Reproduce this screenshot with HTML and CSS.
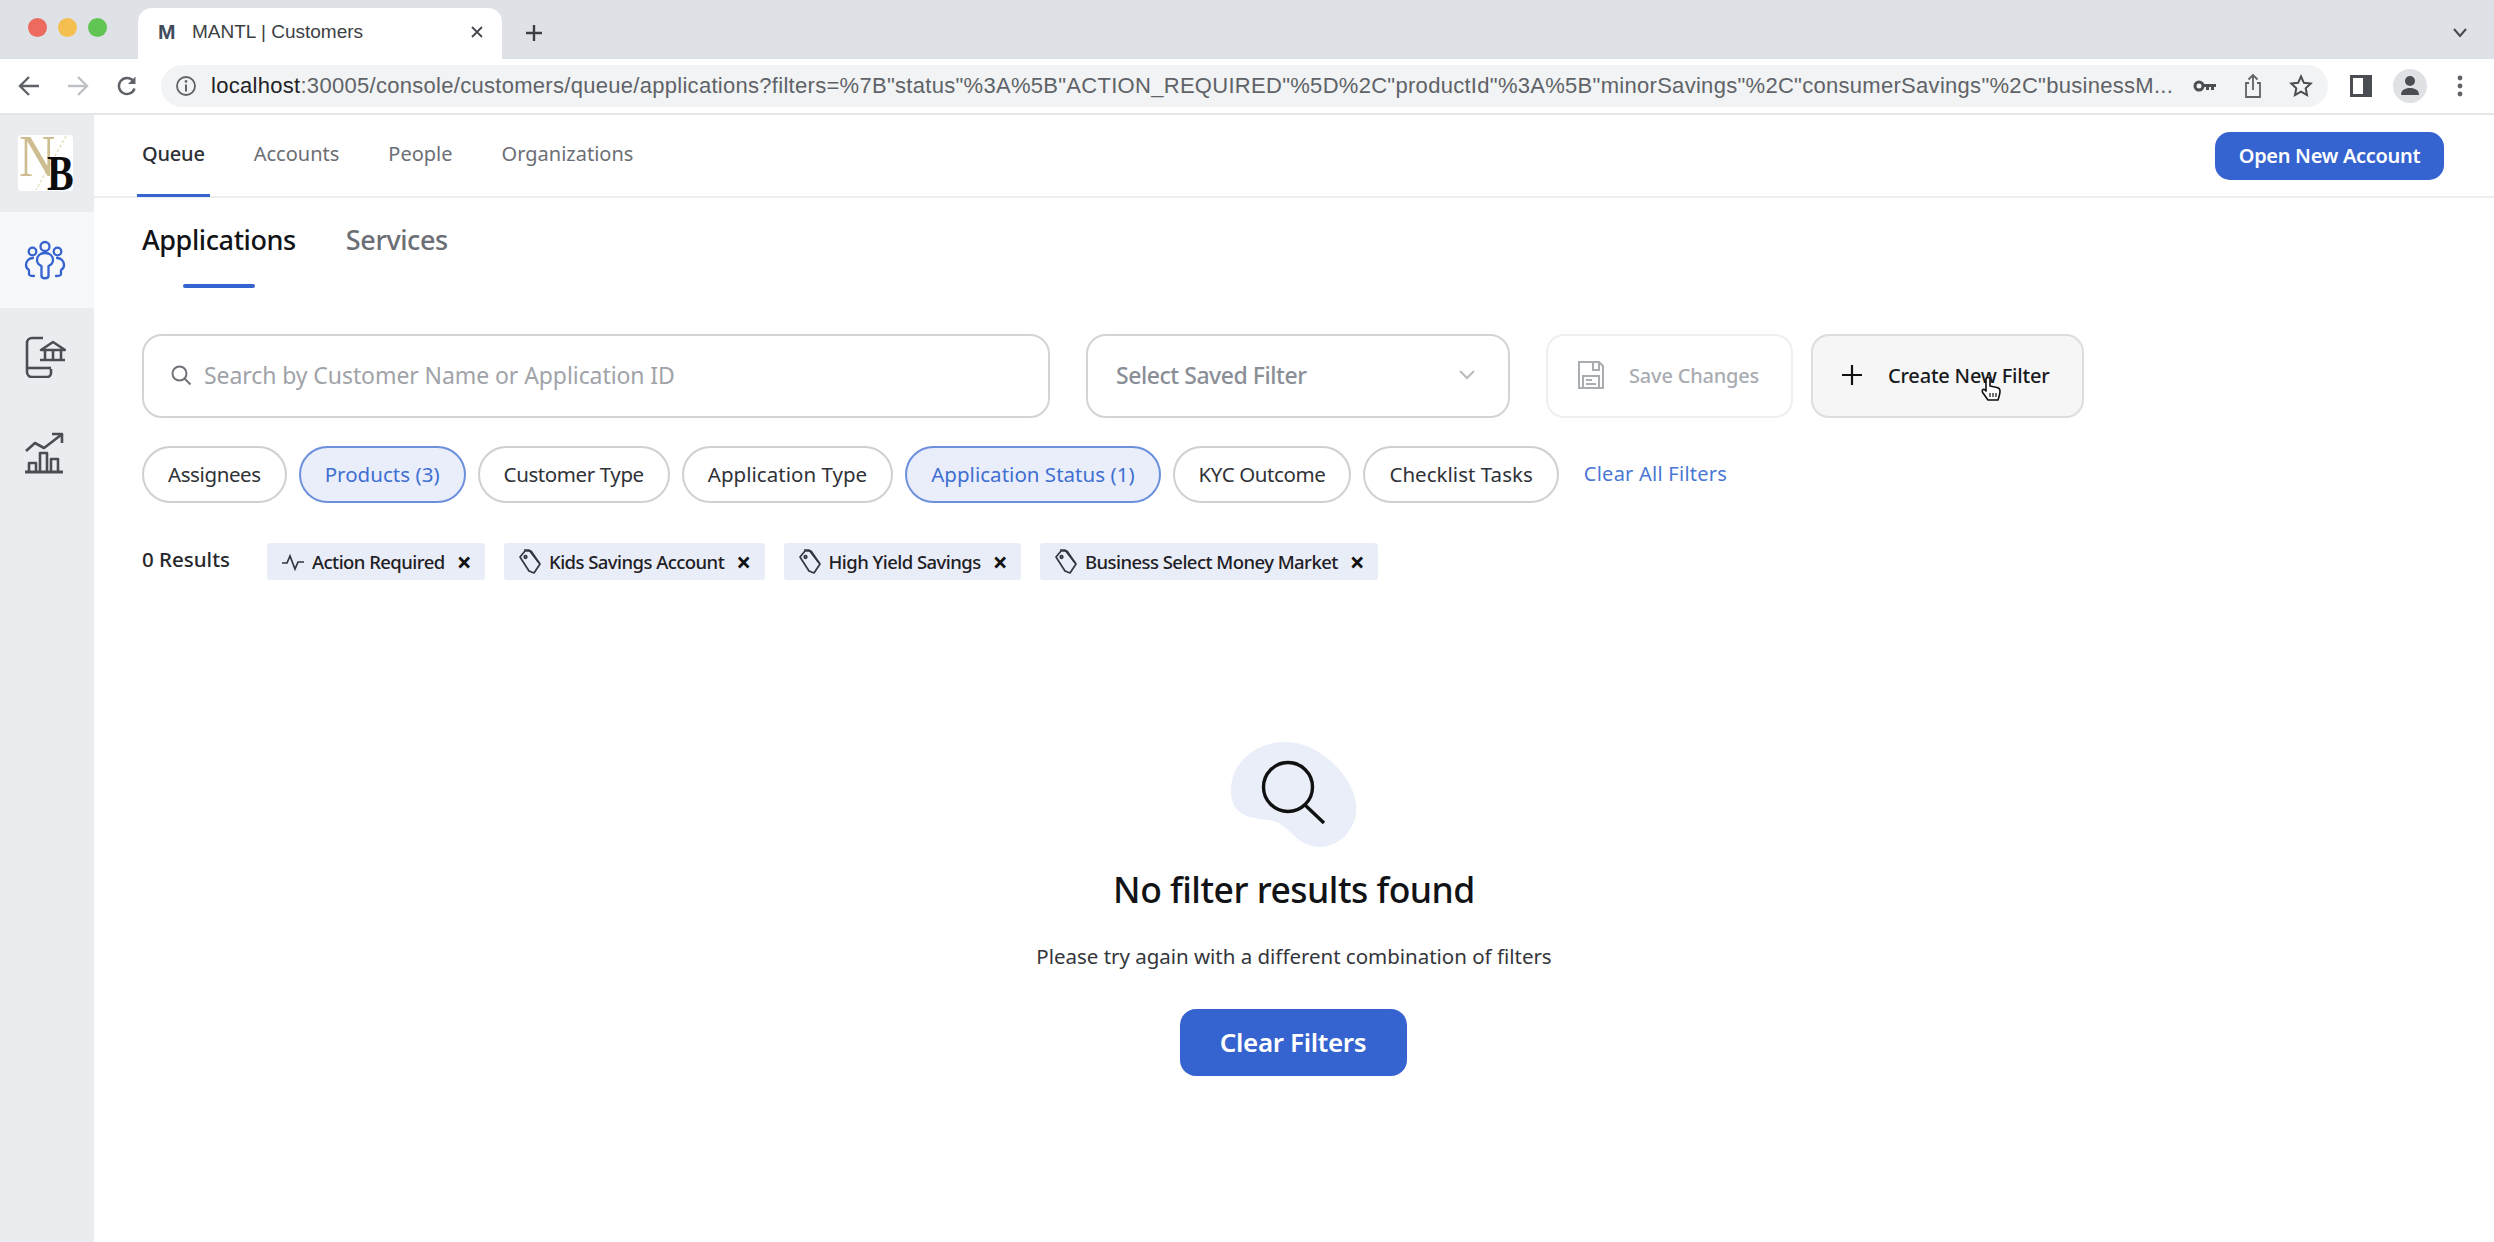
FILE: index.html
```html
<!DOCTYPE html>
<html lang="en">
<head>
<meta charset="utf-8">
<title>MANTL | Customers</title>
<link rel="stylesheet" href="styles.css">
</head>
<body>
<div class="browser">
  <div class="tabstrip">
    <div class="lights"><span class="light red"></span><span class="light yellow"></span><span class="light green"></span></div>
    <div class="tab">
      <span class="favicon">M</span>
      <span class="tab-title">MANTL | Customers</span>
      <svg class="tab-close" width="16" height="16" viewBox="0 0 16 16"><path d="M3 3l10 10M13 3L3 13" stroke="#44474c" stroke-width="1.8" fill="none"/></svg>
    </div>
    <svg class="new-tab" width="20" height="20" viewBox="0 0 20 20"><path d="M10 2v16M2 10h16" stroke="#3c4043" stroke-width="2.4"/></svg>
    <svg class="tab-menu" width="16" height="12" viewBox="0 0 16 12"><path d="M2 2l6 7 6-7" stroke="#45484d" stroke-width="2" fill="none"/></svg>
  </div>
  <div class="toolbar">
    <svg class="nav-ic" width="24" height="24" viewBox="0 0 24 24"><path d="M22 12H4M12 3l-9 9 9 9" stroke="#5f6368" stroke-width="2.4" fill="none"/></svg>
    <svg class="nav-ic" width="24" height="24" viewBox="0 0 24 24"><path d="M2 12h18M12 3l9 9-9 9" stroke="#bdc1c6" stroke-width="2.4" fill="none"/></svg>
    <svg class="nav-ic" width="24" height="24" viewBox="0 0 24 24"><path d="M19.5 14.5A8 8 0 1 1 18 6.8" stroke="#5f6368" stroke-width="2.4" fill="none"/><path d="M20.5 2.5v7.5H13z" fill="#5f6368"/></svg>
    <div class="omnibox">
      <svg width="22" height="22" viewBox="0 0 22 22"><circle cx="11" cy="11" r="9" stroke="#5f6368" stroke-width="1.8" fill="none"/><path d="M11 9.5v7" stroke="#5f6368" stroke-width="2"/><circle cx="11" cy="6.4" r="1.3" fill="#5f6368"/></svg>
      <span class="url"><b>localhost</b>:30005/console/customers/queue/applications?filters=%7B"status"%3A%5B"ACTION_REQUIRED"%5D%2C"productId"%3A%5B"minorSavings"%2C"consumerSavings"%2C"businessM...</span>
      <div class="omni-icons">
        <svg width="24" height="14" viewBox="0 0 24 14"><circle cx="6" cy="7" r="4" stroke="#4a4d52" stroke-width="3" fill="none"/><path d="M10 5h13v3h-2v3h-3V8h-2v3h-3V8h-3z" fill="#4a4d52"/></svg>
        <svg width="20" height="28" viewBox="0 0 20 28"><path d="M6 11H3v14h14V11h-3M10 18V3M5.5 7.5L10 3l4.500 4.500" stroke="#5f6368" stroke-width="1.800" fill="none"/></svg>
        <svg width="24" height="24" viewBox="0 0 24 24"><path d="M12 2.500l2.900 6.300 6.800.8-5 4.700 1.300 6.800-6-3.400-6 3.400 1.300-6.800-5-4.700 6.800-.8z" stroke="#4a4d52" stroke-width="2" fill="none"/></svg>
      </div>
    </div>
    <svg class="side-ic" width="22" height="22" viewBox="0 0 22 22"><path d="M1.500 1.500h19v19h-19z" stroke="#4a4d52" stroke-width="3" fill="none"/><path d="M13 2h7v18h-7z" fill="#4a4d52"/></svg>
    <span class="avatar"><svg width="22" height="24" viewBox="0 0 22 24"><circle cx="11" cy="7" r="5" fill="#4a4d52"/><path d="M2 21c0-5 4-7 9-7s9 2 9 7z" fill="#4a4d52"/></svg></span>
    <svg class="kebab" width="6" height="22" viewBox="0 0 6 22"><circle cx="3" cy="3" r="2.400" fill="#5f6368"/><circle cx="3" cy="11" r="2.400" fill="#5f6368"/><circle cx="3" cy="19" r="2.400" fill="#5f6368"/></svg>
  </div>
  <div class="app">
    <aside class="rail">
      <div class="logo-cell">
        <svg class="logo" width="55" height="56" viewBox="0 0 55 56">
          <rect width="55" height="56" rx="4" fill="#fff"/>
          <path d="M48 1L18 55" stroke="#e3d9b0" stroke-width="1.200" stroke-dasharray="3 2"/>
          <text transform="translate(1 41) scale(.84 1)" class="logo-n">N</text>
          <text transform="translate(29 55) scale(.8 1)" class="logo-b">B</text>
        </svg>
      </div>
      <div class="rail-item active">
        <svg width="42" height="42" viewBox="0 0 42 42" fill="none" stroke="#3563cf" stroke-width="2.300" stroke-linecap="round" stroke-linejoin="round"><circle cx="21" cy="6.500" r="4.500"/><circle cx="8.500" cy="11.500" r="3.800"/><circle cx="33.500" cy="11.500" r="3.800"/><path d="M21 13c-5 0-8 3-8 7 0 3 2 5 4.500 6v10c0 3 7 3 7 0V26c2.500-1 4.500-3 4.500-6 0-4-3-7-8-7z"/><path d="M9 18c-4 0-7 3-7 7 0 3 2 4.500 3 5v4c0 1.500 2 2 5 2M33 18c4 0 7 3 7 7 0 3-2 4.500-3 5v4c0 1.500-2 2-5 2"/></svg>
      </div>
      <div class="rail-item">
        <svg width="42" height="42" viewBox="0 0 42 42" fill="none" stroke="#4a4d52" stroke-width="2.600" stroke-linejoin="round"><path d="M19 2H8a5 5 0 0 0-5 5v29a5 5 0 0 0 5 5h15a4 4 0 0 0 4-4v-4"/><path d="M3 32h24"/><path d="M17 14L29 6l12 8zM16 24h25M21 15v9M29 15v9M37 15v9" /></svg>
      </div>
      <div class="rail-item">
        <svg width="42" height="42" viewBox="0 0 42 42" fill="none" stroke="#4a4d52" stroke-width="2.600" stroke-linejoin="round"><path d="M2 19l9-8 9 5 17-13M28 2h10v9"/><path d="M1 40h38" stroke-width="3"/><path d="M5 40v-9h7v9M16 40V21h7v19M27 40V27h7v13"/></svg>
      </div>
    </aside>
    <main class="content">
      <header class="topnav">
        <nav class="topnav-links">
          <a class="topnav-link current">Queue</a>
          <a class="topnav-link">Accounts</a>
          <a class="topnav-link">People</a>
          <a class="topnav-link">Organizations</a>
        </nav>
        <button class="btn-primary small">Open New Account</button>
      </header>
      <div class="subtabs">
        <a class="subtab current">Applications</a>
        <a class="subtab">Services</a>
      </div>
      <div class="controls">
        <label class="field search">
          <svg width="22" height="22" viewBox="0 0 22 22" fill="none" stroke="#6f7277" stroke-width="2"><circle cx="9.500" cy="9.500" r="7"/><path d="M14.500 14.500l6 6"/></svg>
          <span>Search by Customer Name or Application ID</span>
        </label>
        <div class="field select">
          <span>Select Saved Filter</span>
          <svg width="18" height="12" viewBox="0 0 18 12" fill="none" stroke="#b8bbc0" stroke-width="2"><path d="M2 2l7 7 7-7"/></svg>
        </div>
        <button class="action save">
          <svg width="28" height="30" viewBox="0 0 28 30" fill="none" stroke="#a9acb1" stroke-width="2"><path d="M2 2h20l4 4v22H2z"/><path d="M16 2v8h6V2M6 16h16v12H6zM9 20h6M9 24h10"/></svg>
          Save Changes
        </button>
        <button class="action create">
          <svg width="22" height="22" viewBox="0 0 22 22"><path d="M11 1v20M1 11h20" stroke="#111" stroke-width="2.200"/></svg>
          Create New Filter
          <svg class="cursor" width="22" height="28" viewBox="0 0 22 28"><path d="M6 13V3.500a2 2 0 0 1 4 0V10l7 1.500c2 .5 3 1.500 3 3.500 0 3-1 6-2 9H8l-5-7c-1-1.500-1-3 0-3.500s2 0 3 1.500z" fill="#fff" stroke="#111" stroke-width="1.600" stroke-linejoin="round"/><path d="M10 17v4M13 17v4M16 17v4" stroke="#111" stroke-width="1.200"/></svg>
        </button>
      </div>
      <div class="chips">
        <button class="chip tight">Assignees</button>
        <button class="chip on">Products (3)</button>
        <button class="chip tight">Customer Type</button>
        <button class="chip">Application Type</button>
        <button class="chip on">Application Status (1)</button>
        <button class="chip tight">KYC Outcome</button>
        <button class="chip">Checklist Tasks</button>
        <a class="clear-all">Clear All Filters</a>
      </div>
      <div class="results">
        <span class="count">0 Results</span>
        <span class="tag">
          <svg width="24" height="18" viewBox="0 0 24 18" fill="none" stroke="#33363b" stroke-width="1.700"><path d="M1 10h5l3-7 5 13 3-7h6"/></svg>
          Action Required <i class="x">×</i>
        </span>
        <span class="tag">
          <svg class="tag-ic" width="24" height="26" viewBox="0 0 24 26" fill="none" stroke="#33363b" stroke-width="1.700" stroke-linejoin="round"><path d="M2 8l5-6h6l9 13-6 9-5-2z"/><path d="M6 1l5 0 10 13"/><circle cx="7.500" cy="8" r="1.300"/></svg>
          Kids Savings Account <i class="x">×</i>
        </span>
        <span class="tag">
          <svg class="tag-ic" width="24" height="26" viewBox="0 0 24 26" fill="none" stroke="#33363b" stroke-width="1.700" stroke-linejoin="round"><path d="M2 8l5-6h6l9 13-6 9-5-2z"/><path d="M6 1l5 0 10 13"/><circle cx="7.500" cy="8" r="1.300"/></svg>
          High Yield Savings <i class="x">×</i>
        </span>
        <span class="tag">
          <svg class="tag-ic" width="24" height="26" viewBox="0 0 24 26" fill="none" stroke="#33363b" stroke-width="1.700" stroke-linejoin="round"><path d="M2 8l5-6h6l9 13-6 9-5-2z"/><path d="M6 1l5 0 10 13"/><circle cx="7.500" cy="8" r="1.300"/></svg>
          Business Select Money Market <i class="x">×</i>
        </span>
      </div>
      <section class="empty">
        <svg class="empty-ic" width="126" height="106" viewBox="0 0 126 106">
          <path d="M0 48C0 20 25 0 55 0c30 0 55 25 65 45 8 17 8 35-7 50-13 12-31 13-45 3C58 90 52 80 38 78 15 76 0 72 0 48z" fill="#e9eef9"/>
          <circle cx="57" cy="45" r="24.500" fill="none" stroke="#111" stroke-width="3.400"/>
          <path d="M74 63l19 18" stroke="#111" stroke-width="3.400"/>
        </svg>
        <h2 class="empty-title">No filter results found</h2>
        <p class="empty-text">Please try again with a different combination of filters</p>
        <button class="btn-primary large">Clear Filters</button>
      </section>
    </main>
  </div>
</div>
</body>
</html>
```

FILE: styles.css
```css
* { box-sizing: border-box; }
html, body { margin: 0; height: 100%; overflow: hidden; }
body { background: #fff; font-family: "Noto Sans", "Open Sans", sans-serif; color: #1a1c20; }
.browser { height: 1242px; display: flex; flex-direction: column; }

.tabstrip { height: 59px; background: #dee1e6; display: flex; align-items: flex-end; position: relative; flex: none; }
.lights { display: flex; gap: 11px; position: absolute; left: 28px; top: 18px; }
.light { width: 19px; height: 19px; border-radius: 50%; }
.red { background: #ec6a5e; }
.yellow { background: #f4bf4f; }
.green { background: #61c554; }
.tab { margin-left: 138px; width: 364px; height: 51px; background: #fff; border-radius: 14px 14px 0 0; display: flex; align-items: center; padding: 0 17px 4px 20px; }
.favicon { font: 700 21px "Liberation Sans", sans-serif; color: #414a5a; width: 34px; }
.tab-title { font: 19px "Liberation Sans", sans-serif; color: #3c4043; flex: 1; white-space: nowrap; }
.new-tab { margin: 0 0 16px 22px; }
.tab-menu { position: absolute; right: 26px; top: 27px; }

.toolbar { height: 56px; background: #fff; border-bottom: 2px solid #e3e5e9; display: flex; align-items: center; flex: none; padding: 0 0 1px 17px; }
.nav-ic { flex: none; margin-right: 25px; }
.omnibox { flex: none; width: 2167px; height: 42px; background: #f1f3f4; border-radius: 21px; margin-left: -3px; display: flex; align-items: center; padding: 0 15px 0 14px; }
.url { font: 22px "Liberation Sans", sans-serif; color: #5f6368; margin-left: 14px; white-space: nowrap; flex: 1; overflow: hidden; letter-spacing: .29px; }
.url b { font-weight: 400; color: #202124; }
.omni-icons { display: flex; align-items: center; gap: 26px; }
.side-ic { flex: none; margin-left: 22px; }
.avatar { flex: none; width: 34px; height: 34px; border-radius: 50%; background: #dfe1e5; margin-left: 21px; display: flex; align-items: center; justify-content: center; }
.kebab { flex: none; margin-left: 30px; }

.app { flex: 1; display: flex; min-height: 0; }
.rail { width: 94px; flex: none; background: #ebecef; display: flex; flex-direction: column; }
.logo-cell { height: 97px; padding: 20px 0 0 18px; }
.logo { display: block; overflow: visible; }
.logo-n { font: 60px "Liberation Serif", serif; fill: #cdbd90; }
.logo-b { font: 700 50px "Liberation Serif", serif; fill: #0d0d0d; }
.rail-item { height: 96px; display: flex; align-items: center; justify-content: center; padding: 2px 4px 0 0; }
.rail-item.active { background: #f7f8f9; }

.content { flex: 1; min-width: 0; }
.topnav { height: 83px; border-bottom: 2px solid #eceef0; display: flex; align-items: center; justify-content: space-between; padding: 0 50px 0 48px; }
.topnav-links { display: flex; gap: 49px; align-self: stretch; }
.topnav-link { font-size: 20px; color: #6b6e74; display: flex; align-items: center; position: relative; padding: 0 0 4px; }
.topnav-link.current { color: #2c2f34; font-weight: 500; letter-spacing: -.2px; }
.topnav-link.current::after { content: ""; position: absolute; left: -5px; right: -5px; bottom: -1px; height: 3px; background: #3563cf; }

.btn-primary { border: 0; background: #3563cf; color: #fff; font-family: inherit; font-weight: 600; }
.btn-primary.small { width: 229px; height: 48px; border-radius: 15px; font-size: 20px; letter-spacing: -.3px; }
.btn-primary.large { width: 227px; height: 67px; border-radius: 16px; font-size: 26px; letter-spacing: -.35px; padding-bottom: 3px; }

.subtabs { display: flex; gap: 50px; padding: 0 0 0 48px; height: 93px; }
.subtab { font-size: 27px; font-weight: 500; color: #6b6e74; position: relative; padding-top: 23px; letter-spacing: -.4px; }
.subtab.current { color: #111316; }
.subtab.current::after { content: ""; position: absolute; left: 41px; width: 72px; top: 86px; height: 4px; background: #3563cf; border-radius: 2px; }

.controls { display: flex; align-items: stretch; padding: 0 0 0 48px; margin-top: 43px; height: 84px; }
.field { border: 2px solid #d3d4d7; border-radius: 20px; display: flex; align-items: center; background: #fff; font-size: 23px; padding-bottom: 2px; }
.search { width: 908px; padding-left: 26px; gap: 12px; color: #a0a3a8; letter-spacing: -.08px; }
.select { width: 424px; margin-left: 36px; padding: 0 32px 2px 28px; justify-content: space-between; color: #8a8e96; font-weight: 500; letter-spacing: -.45px; }
.action { height: 84px; border-radius: 18px; font-family: inherit; font-size: 20px; font-weight: 500; display: flex; align-items: center; letter-spacing: -.2px; }
.save { width: 247px; margin-left: 36px; border: 2px solid #eeeff1; background: #fff; color: #a9acb1; padding: 0 0 2px 29px; gap: 24px; }
.create { width: 273px; margin-left: 18px; border: 2px solid #dcdde0; background: #f6f6f7; color: #17191c; padding: 0 0 2px 28px; gap: 25px; position: relative; }
.cursor { position: absolute; left: 167px; top: 40px; }

.chips { display: flex; align-items: center; gap: 12px; padding: 0 0 0 48px; margin-top: 28px; height: 57px; }
.chip { height: 57px; padding: 0 24px; border-radius: 29px; border: 2px solid #cfd0d3; background: #fff; font-family: inherit; font-size: 20.500px; color: #2f3237; letter-spacing: .03px; white-space: nowrap; padding-bottom: 2px; }
.chip.tight { letter-spacing: -.4px; }
.chip.on { background: #e9eefa; border-color: #6d90dc; color: #3f6fd2; }
.clear-all { color: #4a77d4; font-size: 20px; margin-left: 13px; letter-spacing: .25px; white-space: nowrap; padding-bottom: 3px; }

.results { display: flex; align-items: center; padding: 0 0 0 48px; margin-top: 40px; height: 37px; }
.count { font-size: 20.500px; font-weight: 500; width: 125px; letter-spacing: 0; color: #25272b; padding-bottom: 6px; flex: none; }
.tag { height: 37px; background: #e9edf8; border-radius: 3px; display: flex; align-items: center; padding: 0 14px 0 14px; margin-right: 19px; font-size: 18.500px; font-weight: 500; color: #1e2024; white-space: nowrap; letter-spacing: -.55px; gap: 7px; }
.x { font-style: normal; font-weight: 700; font-size: 26px; line-height: 1; margin-left: 5px; color: #111; }

.empty { display: flex; flex-direction: column; align-items: center; padding-top: 162px; }
.empty-ic { display: block; }
.empty-title { margin: 18px 0 0; font-size: 35.500px; line-height: 46px; font-weight: 500; color: #111316; letter-spacing: -.5px; }
.empty-text { margin: 30px 0 0; font-size: 20.500px; line-height: 28px; color: #33363b; letter-spacing: -.02px; }
.empty .btn-primary { margin: 39px 2px 0 0; }
```
